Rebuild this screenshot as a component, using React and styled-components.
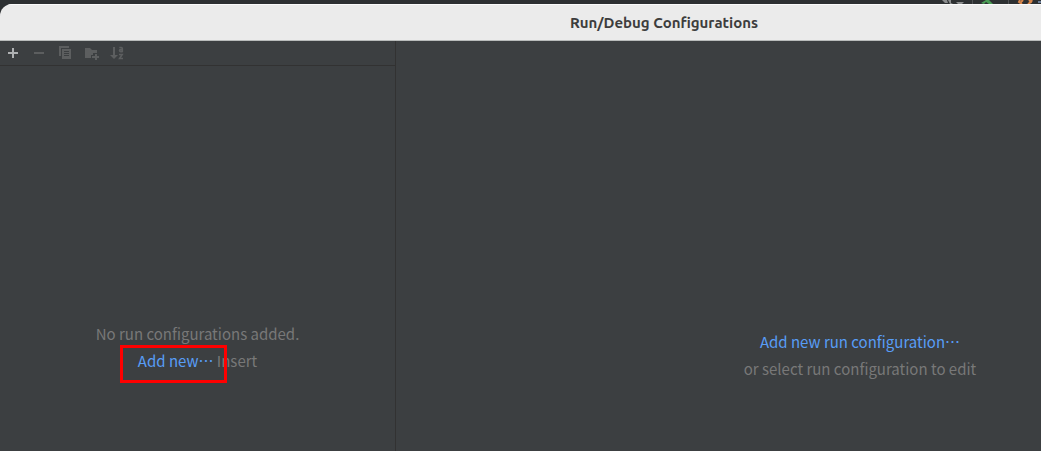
import React from "react";
import styled, { createGlobalStyle } from "styled-components";

const GlobalStyle = createGlobalStyle`
  * { box-sizing: border-box; }
  html, body, #root { height: 100%; }
  body {
    margin: 0;
    overflow: hidden;
    background: #2d3032;
    color: #787878;
    font: 15px/27px "Noto Sans CJK SC", "Noto Sans", sans-serif;
  }
`;

const Desktop = styled.div`
  display: flex;
  flex-direction: column;
  height: 100%;
`;

const BackToolbar = styled.div`
  display: flex;
  justify-content: flex-end;
  flex: none;
  height: 4px;
  svg { display: block; }
`;

const Dialog = styled.section`
  display: flex;
  flex-direction: column;
  flex: 1;
  border-radius: 12px 0 0 0;
  overflow: hidden;
  background: #3c3f41;
`;

const TitleBar = styled.header`
  display: flex;
  align-items: center;
  justify-content: center;
  height: 37px;
  padding-left: 287px;
  background: #ebebeb;
  border-top: 1px solid #fbfbfb;
  border-bottom: 1px solid #b9bcbb;
`;

const Title = styled.h1`
  margin: 0;
  color: #3d3d3d;
  font: 700 15px/20px Ubuntu, "Noto Sans", sans-serif;
`;

const Body = styled.div`
  display: flex;
  flex: 1;
`;

const Sidebar = styled.aside`
  width: 396px;
  flex: none;
  border-right: 1px solid #323232;
`;

const Toolbar = styled.div`
  display: flex;
  align-items: center;
  gap: 10px;
  height: 25px;
  padding-left: 5px;
  border-bottom: 1px solid #323232;
`;

const ToolButton = styled.button`
  display: block;
  width: 16px;
  height: 16px;
  padding: 0;
  border: 0;
  background: none;
  color: ${(p) => (p.disabled ? "#5c5e5f" : "#afb1b3")};
  svg { display: block; }
`;

const Main = styled.main`
  flex: 1;
  padding-left: 283px;
`;

const EmptyState = styled.div`
  padding-top: ${(p) => p.$top}px;
  text-align: center;
  p { margin: 0; }
`;

const Link = styled.a`
  color: #589df6;
  text-decoration: none;
`;

const Marked = styled.span`
  display: inline-block;
  position: relative;
  &::after {
    content: "";
    position: absolute;
    inset: -2px -14px -9px -18px;
    border: 3px solid #ff0000;
    pointer-events: none;
  }
`;

const Icon = ({ children }) => (
  <svg width="16" height="16" viewBox="0 0 16 16" fill="currentColor" aria-hidden="true">
    {children}
  </svg>
);

const tools = [
  { label: "Add", icon: <path d="M7 3h2v4h4v2H9v4H7V9H3V7h4z" /> },
  { label: "Remove", disabled: true, icon: <path d="M3 7h10v2H3z" /> },
  {
    label: "Copy",
    disabled: true,
    icon: (
      <>
        <path d="M2 1h10v2H4v8H2z" />
        <path fillRule="evenodd" d="M5 4h9v10H5zM7 6v1h5V6zM7 8v1h5V8zM7 10v1h5v-1z" />
      </>
    ),
  },
  {
    label: "New folder",
    disabled: true,
    icon: (
      <>
        <path d="M2 3h5l2 2h5v3h-4v2H8v3H2z" />
        <path d="M12 9h2v2h2v2h-2v2h-2v-2H9v-2h3z" />
      </>
    ),
  },
  {
    label: "Sort configurations",
    disabled: true,
    icon: (
      <>
        <path d="M4 2h2v8h3l-4 4-4-4h3z" />
        <path
          fill="none"
          stroke="currentColor"
          strokeWidth="1.6"
          d="M10.300 2.500h2q1 0 1 1v3.800M13.300 4.600h-1.800q-1 0-1 1t1 1h1.800M10 9.500h3.200l-2.600 4H14"
        />
      </>
    ),
  },
];

export default function App() {
  return (
    <>
      <GlobalStyle />
      <Desktop>
        <BackToolbar>
          <svg width="105" height="4" viewBox="0 0 105 4" aria-hidden="true">
            <path fill="#8a8c8d" d="M6 0h5l1 3h-3zM12 0h3v3l2 1h-3zM20 2h8l-2 2h-4z" />
            <path fill="#499c54" d="M45 3l5-3h3l4 4h-4l-3-2-2 2z" />
            <path stroke="#505254" d="M36.500 0v4M72.500 0v4" />
            <path fill="none" stroke="#d9864a" strokeWidth="2" d="M84 0l-1 2 3 2M87 0l-2 2M93 0l2 2M96 0l-1 2-3 2" />
            <path fill="#6d7f99" d="M102 1h3v2h-3z" />
          </svg>
        </BackToolbar>
        <Dialog>
          <TitleBar>
            <Title>Run/Debug Configurations</Title>
          </TitleBar>
          <Body>
            <Sidebar>
              <Toolbar>
                {tools.map((t) => (
                  <ToolButton key={t.label} aria-label={t.label} disabled={t.disabled}>
                    <Icon>{t.icon}</Icon>
                  </ToolButton>
                ))}
              </Toolbar>
              <EmptyState $top={254}>
                <p>No run configurations added.</p>
                <p>
                  <Marked><Link href="#add">Add new<span lang="zh-CN">…</span></Link></Marked> Insert
                </p>
              </EmptyState>
            </Sidebar>
            <Main>
              <EmptyState $top={287}>
                <p><Link href="#add">Add new run configuration<span lang="zh-CN">…</span></Link></p>
                <p>or select run configuration to edit</p>
              </EmptyState>
            </Main>
          </Body>
        </Dialog>
      </Desktop>
    </>
  );
}
